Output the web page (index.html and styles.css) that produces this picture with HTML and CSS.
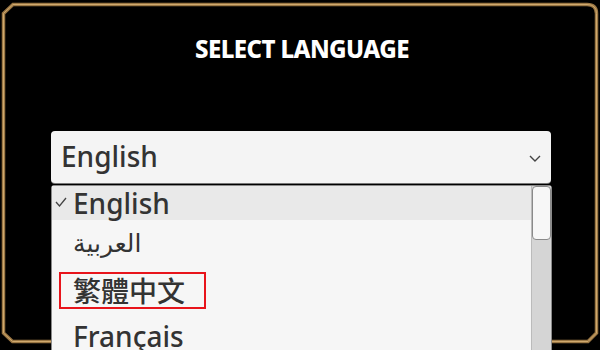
FILE: index.html
```html
<!DOCTYPE html>
<html>
<head>
<meta charset="utf-8">
<link rel="stylesheet" href="styles.css">
</head>
<body>
<div class="screen">
  <svg class="frame" width="600" height="350" viewBox="0 0 600 350">
    <path d="M3.5 13.5 L13 4.5 L587 4.5 Q596.5 4.5 596.5 13.5 L596.5 333 L588 341.5 L12.5 341.5 L3.5 333 Z" fill="none" stroke="#9b7744" stroke-width="3.5"/>
    <path d="M3.5 13.5 L13 4.5 L587 4.5 Q596.5 4.5 596.5 13.5 L596.5 333 L588 341.5 L12.5 341.5 L3.5 333 Z" fill="none" stroke="#cfa96e" stroke-width="1"/>
  </svg>
  <main class="content">
    <h1 class="title">SELECT LANGUAGE</h1>
    <div class="select">
      <span class="select-value">English</span>
      <svg class="chevron" width="12" height="7" viewBox="0 0 12 7"><polyline points="1,1 6,6 11,1" fill="none" stroke="#444" stroke-width="1.4"/></svg>
    </div>
  </main>
  <div class="menu">
    <ul class="options">
      <li class="option selected">
        <svg class="check" width="12" height="10" viewBox="0 0 12 10"><polyline points="1,5 4.5,9 11,1" fill="none" stroke="#444" stroke-width="1.3"/></svg>
        <span>English</span>
      </li>
      <li class="option arabic"><span>العربية</span></li>
      <li class="option chinese"><span class="marked">繁體中文</span></li>
      <li class="option french"><span>Français</span></li>
    </ul>
    <div class="scrollbar"><div class="thumb"></div></div>
  </div>
</div>
</body>
</html>
```

FILE: styles.css
```css
html, body {
  margin: 0;
  padding: 0;
  background: #000;
}
.screen {
  position: relative;
  width: 600px;
  height: 350px;
  overflow: hidden;
  background: #000;
  font-family: "Noto Sans", "DejaVu Sans", "Noto Sans CJK TC", sans-serif;
}
.frame {
  position: absolute;
  left: 0;
  top: 0;
}
.content {
  position: relative;
  display: flex;
  flex-direction: column;
  padding: 33px 49px 0 51px;
}
.title {
  margin: 0;
  height: 32px;
  line-height: 32px;
  text-align: center;
  color: #fff;
  font-size: 24px;
  font-weight: 800;
  letter-spacing: -0.6px;
  padding-left: 2px;
}
.select {
  margin-top: 66px;
  height: 52px;
  background: #f4f4f4;
  border-radius: 4px;
  display: flex;
  align-items: center;
  justify-content: space-between;
  padding: 0 10px 0 10px;
  box-shadow: 0 1px 0 #777;
}
.select-value {
  font-size: 28px;
  font-weight: 500;
  color: #333;
  line-height: 1;
  padding-bottom: 2px;
}
.chevron {
  margin-top: 2px;
}
.menu {
  position: absolute;
  left: 51px;
  top: 185px;
  width: 499px;
  height: 180px;
  background: #f6f6f6;
  border: 1px solid #8a8a8a;
  border-radius: 3px;
  display: flex;
}
.options {
  list-style: none;
  margin: 0;
  padding: 0;
  flex: 1;
}
.option {
  display: flex;
  align-items: center;
  padding-left: 21px;
  color: #333;
  font-size: 28px;
  font-weight: 500;
  position: relative;
}
.option.selected {
  height: 34px;
  background: #e9e9e9;
}
.check {
  position: absolute;
  left: 3px;
  top: 11px;
}
.option.arabic {
  height: 46px;
  font-size: 25px;
  font-weight: 400;
  font-family: "DejaVu Sans", sans-serif;
}
.option.chinese {
  height: 48px;
  font-family: "Noto Sans CJK TC", sans-serif;
}
.marked {
  border: 2px solid #e8141b;
  padding: 0 19px 0 12px;
  margin-left: -14px;
  line-height: 33px;
}
.option.french {
  height: 44px;
}
.scrollbar {
  width: 19px;
  background: #d5d5d5;
  border-left: 1px solid #bbb;
}
.thumb {
  height: 54px;
  background: #f7f7f7;
  border: 1px solid #8a8a8a;
  border-radius: 4px;
  box-sizing: border-box;
}
```
